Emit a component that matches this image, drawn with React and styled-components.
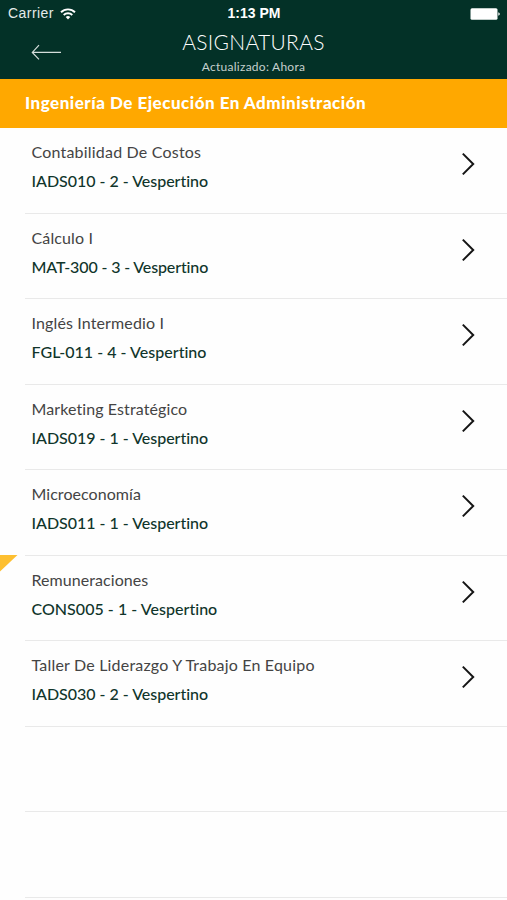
import React from 'react'
import styled, { createGlobalStyle } from 'styled-components';

const GlobalStyle = createGlobalStyle`
    body {
        margin: 0;
        background: #fefefe;
        overflow: hidden;
    }
    * {
        box-sizing: border-box;
    }
`;

const Screen = styled.div`
    width: 507px;
    height: 900px;
    overflow: hidden;
    background: #fefefe;
    font-family: Lato, 'Open Sans', sans-serif;
    font-variant-ligatures: none;
    white-space: nowrap;
`;

const Header = styled.header`
    height: 79px;
    background: #033127;
    color: #fff;
`;

const StatusBar = styled.div`
    display: grid;
    grid-template-columns: 1fr auto 1fr;
    align-items: center;
    height: 27px;
    padding: 0 7px 0 8px;
    font-family: 'Liberation Sans', Arial, sans-serif;
    font-size: 14px;
    line-height: 27px;
`;

const Carrier = styled.div`
    display: flex;
    align-items: center;
    gap: 6px;
    color: #e4ebe9;
    letter-spacing: 0.45px;
`;

const Clock = styled.div`
    font-weight: bold;
    font-size: 14px;
`;

const BatteryIcon = styled.svg`
    justify-self: end;
`;

const NavBar = styled.div`
    display: grid;
    grid-template-columns: 92px 1fr 92px;
    height: 52px;
`;

const BackButton = styled.button`
    display: flex;
    align-items: flex-start;
    border: 0;
    padding: 17px 0 0 31px;
    background: none;
    cursor: pointer;
`;

const Heading = styled.div`
    text-align: center;
`;

const Title = styled.h1`
    margin: 0;
    padding-top: 1px;
    font-size: 21px;
    font-weight: 300;
    line-height: 27px;
    letter-spacing: 0.3px;
`;

const Updated = styled.p`
    margin: 0;
    padding-top: 1px;
    font-size: 12px;
    line-height: 22px;
    color: #c5d0cd;
    letter-spacing: 0.25px;
`;

const Career = styled.h2`
    height: 48.5px;
    margin: 0;
    padding-left: 25px;
    background: #ffa800;
    color: #fff;
    font-size: 17px;
    font-weight: 900;
    line-height: 48px;
    letter-spacing: 0.5px;
`;

const List = styled.ul`
    position: relative;
    margin: 0;
    padding: 0.5px 0 0 25px;
    list-style: none;
`;

const Row = styled.li`
    display: flex;
    justify-content: space-between;
    height: 85.5px;
    padding: 9px 32px 0 6.5px;
    border-bottom: 1px solid #e9e9e9;
`;

const Name = styled.div`
    font-size: 16px;
    line-height: 29px;
    color: #444;
    letter-spacing: ${props => props.$spacing}px;
`;

const Code = styled.div`
    font-size: 16px;
    font-weight: 500;
    line-height: 29px;
    color: #10352b;
    letter-spacing: ${props => props.$spacing}px;
`;

const Chevron = styled.svg`
    margin-top: 15px;
`;

const Corner = styled.svg`
    position: absolute;
    top: 427.5px;
    left: 0;
`;

const courses = [
    { name: 'Contabilidad De Costos', code: 'IADS010 - 2 - Vespertino', nameSpacing: 0.2, codeSpacing: -0.02 },
    { name: 'Cálculo I', code: 'MAT-300 - 3 - Vespertino', nameSpacing: 0.12, codeSpacing: -0.14 },
    { name: 'Inglés Intermedio I', code: 'FGL-011 - 4 - Vespertino', nameSpacing: 0.13, codeSpacing: 0.02 },
    { name: 'Marketing Estratégico', code: 'IADS019 - 1 - Vespertino', nameSpacing: 0.1, codeSpacing: -0.02 },
    { name: 'Microeconomía', code: 'IADS011 - 1 - Vespertino', nameSpacing: 0.05, codeSpacing: -0.02 },
    { name: 'Remuneraciones', code: 'CONS005 - 1 - Vespertino', nameSpacing: 0.06, codeSpacing: 0.03 },
    { name: 'Taller De Liderazgo Y Trabajo En Equipo', code: 'IADS030 - 2 - Vespertino', nameSpacing: 0.19, codeSpacing: -0.02 },
];

function WifiIcon() {
    return (
        <svg width="16" height="12" viewBox="0 0 16 12" fill="none" stroke="#fff" strokeWidth="1.9">
            <path d="M1 4.2a10 10 0 0 1 14 0" />
            <path d="M3.7 7a6.1 6.1 0 0 1 8.6 0" />
            <path d="M8 11.4 5.7 9a3.3 3.3 0 0 1 4.6 0z" fill="#fff" stroke="none" />
        </svg>
    )
}

function Course(props) {
    return (
        <Row>
            <div>
                <Name $spacing={props.nameSpacing}>{props.name}</Name>
                <Code $spacing={props.codeSpacing}>{props.code}</Code>
            </div>
            <Chevron width="14" height="24" viewBox="0 0 14 24" fill="none" stroke="#151515" strokeWidth="2">
                <path d="M1.8 1.6 12.2 12 1.8 22.4" />
            </Chevron>
        </Row>
    )
}

export default function App() {
    return (
        <Screen>
            <GlobalStyle />
            <Header>
                <StatusBar>
                    <Carrier>Carrier <WifiIcon /></Carrier>
                    <Clock>1:13 PM</Clock>
                    <BatteryIcon width="30" height="12" viewBox="0 0 30 12" fill="#fff">
                        <rect x="0.5" y="0.3" width="27" height="11.4" rx="1.5" />
                        <path d="M28.3 4.2q1.5.5 1.5 1.8t-1.5 1.8z" />
                    </BatteryIcon>
                </StatusBar>
                <NavBar>
                    <BackButton aria-label="Volver">
                        <svg width="31" height="16" viewBox="0 0 31 16" fill="none" stroke="#d5dedb" strokeWidth="1.2">
                            <path d="M30 8.4H1.5M8 1.2 1.3 8.4 8 15.4" />
                        </svg>
                    </BackButton>
                    <Heading>
                        <Title>ASIGNATURAS</Title>
                        <Updated>Actualizado: Ahora</Updated>
                    </Heading>
                </NavBar>
            </Header>
            <Career>Ingeniería De Ejecución En Administración</Career>
            <List>
                {courses.map(course => <Course key={course.name} {...course} />)}
                <Row />
                <Row />
                <Corner width="18" height="17" viewBox="0 0 18 17">
                    <path d="M0 0h17.5L0 16.5z" fill="#fdbf30" />
                </Corner>
            </List>
        </Screen>
    )
}
